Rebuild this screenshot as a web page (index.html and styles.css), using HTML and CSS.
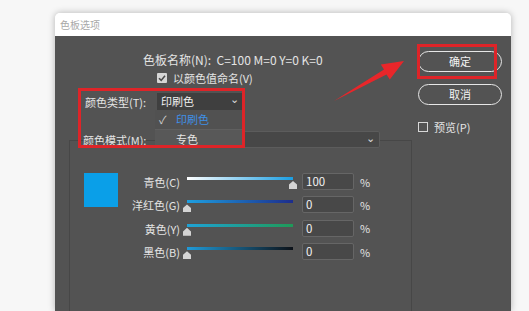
FILE: index.html
```html
<!DOCTYPE html>
<html lang="zh">
<head>
<meta charset="utf-8">
<link rel="stylesheet" href="styles.css">
</head>
<body>
<div class="dialog">
  <div class="titlebar">色板选项</div>
  <div class="body">
    <div class="main">
      <div class="name-row">色板名称(N):&nbsp; C=100 M=0 Y=0 K=0</div>
      <div class="check-row"><span class="cbox checked"><svg viewBox="0 0 10 10" width="10" height="10"><path d="M2 5.2 L4.2 7.4 L8 2.8" fill="none" stroke="#4a4a4a" stroke-width="1.6"/></svg></span><span>以颜色值命名(V)</span></div>
      <div class="type-row"><span class="lbl">颜色类型(T):</span><span class="select small">印刷色<span class="chev">⌄</span></span></div>
      <div class="mode-row"><span class="lbl">颜色模式(M):</span><span class="select wide"><span class="chev">⌄</span></span></div>
      <div class="panel">
        <div class="swatch"></div>
        <div class="sliders">
          <span class="slbl">青色(C)</span>
          <span class="slider"><span class="bar bar-c"></span><span class="thumb end"></span></span>
          <span class="num">100</span><span class="pct">%</span>
          <span class="slbl">洋红色(G)</span>
          <span class="slider"><span class="bar bar-g"></span><span class="thumb"></span></span>
          <span class="num">0</span><span class="pct">%</span>
          <span class="slbl">黄色(Y)</span>
          <span class="slider"><span class="bar bar-y"></span><span class="thumb"></span></span>
          <span class="num">0</span><span class="pct">%</span>
          <span class="slbl">黑色(B)</span>
          <span class="slider"><span class="bar bar-b"></span><span class="thumb"></span></span>
          <span class="num">0</span><span class="pct">%</span>
        </div>
      </div>
    </div>
    <div class="side">
      <div class="btn">确定</div>
      <div class="btn">取消</div>
      <div class="preview"><span class="cbox empty"></span><span>预览(P)</span></div>
    </div>

    <div class="menu">
      <div class="item"><span class="tick">✓</span><span class="blue">印刷色</span></div>
      <div class="item hover"><span class="tick"></span><span>专色</span></div>
    </div>
    <div class="mark mark-type"></div>
    <div class="mark mark-ok"></div>
    <svg class="arrow" width="456" height="120" viewBox="0 0 456 120">
      <polygon points="279,65 331.5,38.5 334.8,43.6 349,25 325.8,28.6 329,33.4" fill="#e8262a"/>
    </svg>
  </div>
</div>
</body>
</html>
```

FILE: styles.css
```css
* { box-sizing: border-box; }
html, body { margin: 0; padding: 0; }
body {
  background: #f7f7f7;
  width: 529px;
  height: 311px;
  overflow: hidden;
  font-family: "Noto Sans CJK SC", "Noto Sans", "Liberation Sans", sans-serif;
  font-size: 11px;
  color: #e4e4e4;
}
.dialog {
  margin: 13px 0 0 55px;
  width: 456px;
  height: 298px;
  border-radius: 5px 5px 0 0;
  overflow: hidden;
  box-shadow: 0 0 7px rgba(0,0,0,0.28);
}
.titlebar {
  height: 23px;
  line-height: 23px;
  background: #ffffff;
  color: #a8a8a8;
  font-size: 10px;
  padding-left: 5px;
}
.body {
  position: relative;
  background: #535353;
  height: 275px;
  display: flex;
}
.main { width: 357px; }
.name-row {
  margin-top: 16px;
  padding-left: 88px;
  line-height: 15px;
  font-size: 12px;
  white-space: nowrap;
}
.check-row {
  margin-top: 4px;
  padding-left: 102px;
  display: flex;
  align-items: center;
  gap: 6px;
  line-height: 14px;
}
.cbox {
  width: 10px;
  height: 10px;
  display: inline-block;
  flex: none;
}
.cbox.checked { background: #d6d6d6; border-radius: 1px; }
.cbox.checked svg { display: block; }
.cbox.empty { border: 1px solid #d8d8d8; }
.type-row {
  margin-top: 8px;
  padding-left: 30px;
  display: flex;
  align-items: center;
}
.lbl { width: 72px; white-space: nowrap; }
.select {
  position: relative;
  height: 17px;
  line-height: 17px;
  padding-left: 4px;
  color: #f0f0f0;
}
.select.small { width: 86px; background: #3f3f3f; }
.select.wide { width: 225px; background: #474747; border: 1px solid #5c5c5c; border-radius: 2px; }
.chev {
  position: absolute;
  right: 4px;
  top: -3px;
  font-size: 11px;
  color: #dcdcdc;
}
.mode-row {
  position: relative;
  z-index: 1;
  margin-top: 21px;
  padding-left: 28px;
  display: flex;
  align-items: center;
}
.panel {
  margin: -8px 0 0 14px;
  width: 343px;
  height: 180px;
  border: 1px solid #474747;
  display: flex;
  padding: 32px 0 0 14px;
}
.swatch {
  width: 34px;
  height: 34px;
  background: #0a9fe8;
  flex: none;
}
.sliders {
  display: grid;
  grid-template-columns: 62px 113px 61px auto;
  grid-auto-rows: 17px;
  row-gap: 6.4px;
  align-items: center;
}
.slbl { text-align: right; white-space: nowrap; padding-top: 1px; }
.slider {
  position: relative;
  height: 17px;
  margin-left: 7px;
  width: 106px;
}
.bar {
  position: absolute;
  left: 0;
  right: 0;
  top: 4px;
  height: 3px;
}
.bar-c { background: linear-gradient(90deg, #ffffff, #1b9ee2); }
.bar-g { background: linear-gradient(90deg, #1e9fe0, #1d2d8c); }
.bar-y { background: linear-gradient(90deg, #1ea2d6, #1f9a58); }
.bar-b { background: linear-gradient(90deg, #209ad8, #0c1118); }
.thumb {
  position: absolute;
  left: -4px;
  top: 8px;
  width: 8px;
  height: 8px;
  background: #d4d4d4;
  clip-path: polygon(50% 0, 100% 45%, 100% 100%, 0 100%, 0 45%);
}
.thumb.end { left: auto; right: -4px; }
.num {
  margin-left: 9px;
  width: 52px;
  height: 17px;
  line-height: 15px;
  background: #484848;
  border: 1px solid #666;
  border-radius: 2px;
  padding-left: 3px;
  color: #f2f2f2;
  font-size: 11.5px;
}
.pct { margin-left: 6px; }
.side {
  padding: 15px 0 0 6px;
  display: flex;
  flex-direction: column;
}
.btn {
  width: 84px;
  height: 21px;
  line-height: 18px;
  border: 1.5px solid #e6e6e6;
  border-radius: 11px;
  text-align: center;
  color: #f2f2f2;
  margin-bottom: 12px;
}
.preview {
  margin-top: 2px;
  display: flex;
  align-items: center;
  gap: 6px;
}
.menu {
  position: absolute;
  left: 100px;
  top: 74px;
  width: 88px;
  height: 37px;
  background: #515151;
  z-index: 2;
}
.item {
  height: 18px;
  line-height: 18px;
  display: flex;
  align-items: center;
}
.item.hover { background: #585858; border-top: 1px solid #5f5f5f; margin-top: 1px; }
.tick { width: 21px; padding-left: 4px; color: #d0d0d0; font-size: 11px; }
.blue { color: #3e8fe6; }
.mark {
  position: absolute;
  border: 3px solid #de2428;
  z-index: 3;
}
.mark-type { left: 23px; top: 52px; width: 167px; height: 60px; }
.mark-ok { left: 362px; top: 8px; width: 80px; height: 35px; }
.arrow {
  position: absolute;
  left: 0;
  top: 0;
  z-index: 3;
}
```
